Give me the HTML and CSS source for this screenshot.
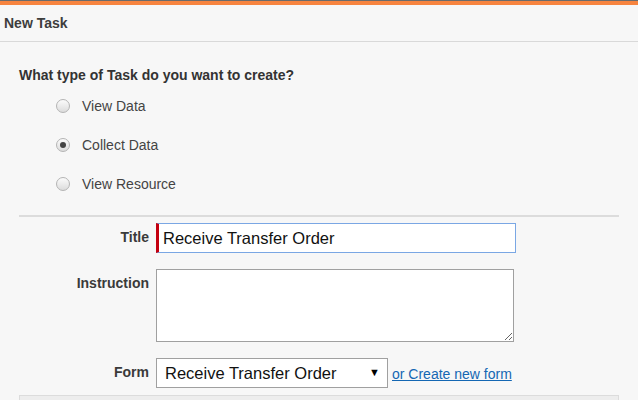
FILE: index.html
```html
<!DOCTYPE html>
<html lang="en">
<head>
    <meta charset="UTF-8">
    <title>New Task</title>
    <link rel="stylesheet" href="styles.css">
</head>
<body>
    <div class="accent-bar"></div>
    <header class="panel-header">New Task</header>
    <main class="panel-body">
        <p class="question">What type of Task do you want to create?</p>
        <ul class="type-list">
            <li><span class="radio"></span>View Data</li>
            <li><span class="radio checked"></span>Collect Data</li>
            <li><span class="radio"></span>View Resource</li>
        </ul>
        <div class="task-form">
            <label class="field-label" for="title">Title</label>
            <div class="field">
                <input type="text" id="title" class="title-input" value="Receive Transfer Order">
            </div>

            <label class="field-label" for="instruction">Instruction</label>
            <div class="field">
                <textarea id="instruction" class="instruction-input"></textarea>
            </div>

            <label class="field-label" for="form">Form</label>
            <div class="field form-field">
                <span class="select-wrap">
                    <select id="form" class="form-select">
                        <option>Receive Transfer Order</option>
                    </select>
                </span>
                <a href="#" class="create-link">or Create new form</a>
            </div>
        </div>
        <div class="next-section"></div>
    </main>
</body>
</html>
```

FILE: styles.css
```css
* {
    margin: 0;
    padding: 0;
    box-sizing: border-box;
}

body {
    background-color: #f7f7f7;
    color: #333;
    font-family: "Liberation Sans", Arial, sans-serif;
    overflow: hidden;
}

.accent-bar {
    height: 5px;
    border-top: 1px solid #6b6b6b;
    background-color: #f7843f;
}

.panel-header {
    height: 37px;
    padding: 10px 4px 0;
    font-size: 14px;
    font-weight: bold;
    color: #3d3d3d;
    border-bottom: 1px solid #d9d9d9;
}

.panel-body {
    padding: 0 19px;
}

.question {
    margin-top: 25px;
    font-size: 14px;
    font-weight: bold;
    color: #333;
}

.type-list {
    list-style: none;
    margin: 3px 0 0 37px;
}

.type-list li {
    display: flex;
    align-items: center;
    gap: 12px;
    height: 39px;
    font-size: 14px;
    color: #444;
}

.radio {
    width: 14px;
    height: 14px;
    border-radius: 50%;
    border: 1px solid #b4b4b4;
    background: linear-gradient(#fbfbfb, #dcdcdc);
    display: flex;
    align-items: center;
    justify-content: center;
}

.radio.checked::after {
    content: "";
    width: 6px;
    height: 6px;
    border-radius: 50%;
    background-color: #444;
}

.task-form {
    margin-top: 12px;
    padding-top: 6px;
    border-top: 2px solid #dcdcdc;
    display: grid;
    grid-template-columns: 130px 1fr;
    column-gap: 7px;
    row-gap: 16px;
}

.field-label {
    text-align: right;
    font-size: 14px;
    font-weight: bold;
    color: #3a3a3a;
    padding-top: 6px;
}

.title-input {
    width: 360px;
    height: 30px;
    padding: 0 4px;
    border: 1px solid #7aa7e4;
    border-left: 3px solid #c4000f;
    font-family: "Liberation Sans", Arial, sans-serif;
    font-size: 16.5px;
    color: #111;
    background-color: #fff;
    outline: none;
}

.instruction-input {
    display: block;
    width: 358px;
    height: 73px;
    border: 1px solid #a0a0a0;
    background-color: #fff;
    font-family: "Liberation Sans", Arial, sans-serif;
    font-size: 14px;
}

.form-field {
    display: flex;
    align-items: center;
    gap: 4px;
}

.select-wrap {
    position: relative;
    display: inline-block;
}

.select-wrap::after {
    content: "\25BC";
    position: absolute;
    right: 8px;
    top: 8px;
    font-size: 11px;
    color: #000;
    pointer-events: none;
}

.form-select {
    appearance: none;
    -webkit-appearance: none;
    width: 232px;
    height: 30px;
    padding: 0 8px;
    border: 1px solid #a0a0a0;
    border-radius: 0;
    background-color: #fff;
    font-family: "Liberation Sans", Arial, sans-serif;
    font-size: 16.5px;
    color: #111;
}

.create-link {
    font-size: 14px;
    color: #1467b3;
    padding-top: 2px;
}

.next-section {
    margin-top: 7px;
    height: 20px;
    border: 1px solid #dcdcdc;
    background-color: #ededed;
}
```
